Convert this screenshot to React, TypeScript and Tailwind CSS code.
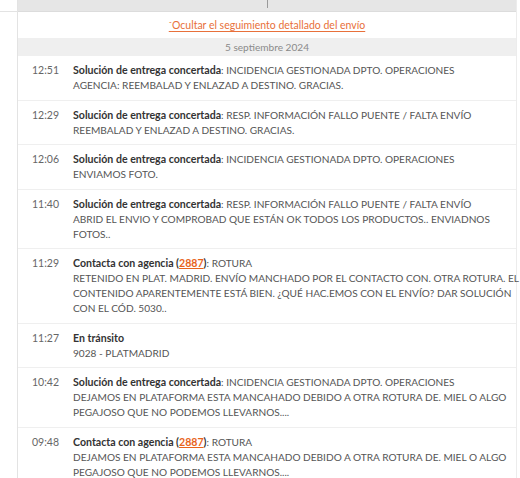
import React from 'react';

interface Entry {
  time: string;
  title: string;
  agency?: string;
  status?: string;
  lines: string[];
}

const entries: Entry[] = [
  {
    time: '12:51',
    title: 'Solución de entrega concertada',
    status: 'INCIDENCIA GESTIONADA DPTO. OPERACIONES',
    lines: ['AGENCIA: REEMBALAD Y ENLAZAD A DESTINO. GRACIAS.'],
  },
  {
    time: '12:29',
    title: 'Solución de entrega concertada',
    status: 'RESP. INFORMACIÓN FALLO PUENTE / FALTA ENVÍO',
    lines: ['REEMBALAD Y ENLAZAD A DESTINO. GRACIAS.'],
  },
  {
    time: '12:06',
    title: 'Solución de entrega concertada',
    status: 'INCIDENCIA GESTIONADA DPTO. OPERACIONES',
    lines: ['ENVIAMOS FOTO.'],
  },
  {
    time: '11:40',
    title: 'Solución de entrega concertada',
    status: 'RESP. INFORMACIÓN FALLO PUENTE / FALTA ENVÍO',
    lines: ['ABRID EL ENVIO Y COMPROBAD QUE ESTÁN OK TODOS LOS PRODUCTOS.. ENVIADNOS', 'FOTOS..'],
  },
  {
    time: '11:29',
    title: 'Contacta con agencia',
    agency: '2887',
    status: 'ROTURA',
    lines: [
      'RETENIDO EN PLAT. MADRID. ENVÍO MANCHADO POR EL CONTACTO CON. OTRA ROTURA. EL',
      'CONTENIDO APARENTEMENTE ESTÁ BIEN. ¿QUÉ HAC.EMOS CON EL ENVÍO? DAR SOLUCIÓN',
      'CON EL CÓD. 5030..',
    ],
  },
  {
    time: '11:27',
    title: 'En tránsito',
    lines: ['9028 - PLATMADRID'],
  },
  {
    time: '10:42',
    title: 'Solución de entrega concertada',
    status: 'INCIDENCIA GESTIONADA DPTO. OPERACIONES',
    lines: ['DEJAMOS EN PLATAFORMA ESTA MANCAHADO DEBIDO A OTRA ROTURA DE. MIEL O ALGO', 'PEGAJOSO QUE NO PODEMOS LLEVARNOS....'],
  },
  {
    time: '09:48',
    title: 'Contacta con agencia',
    agency: '2887',
    status: 'ROTURA',
    lines: ['DEJAMOS EN PLATAFORMA ESTA MANCAHADO DEBIDO A OTRA ROTURA DE. MIEL O ALGO', 'PEGAJOSO QUE NO PODEMOS LLEVARNOS....'],
  },
];

export default function App() {
  return (
    <div className="w-[520px] h-[478px] overflow-hidden bg-white flex items-start font-['Lato',sans-serif] text-[10.1px] leading-[15px] text-[#555]">
      {/* left gutter */}
      <div className="w-[18px] h-full shrink-0 border-r border-[#e3e3e3]">
        <div className="h-[12px] border-b border-[#e3e3e3]"></div>
      </div>

      <div className="w-[499px] shrink-0 min-h-full border-r border-[#ececec] flex flex-col">
        {/* top bar */}
        <div className="h-[12px] shrink-0 bg-[#e6e6e6] border-b border-[#dcdcdc] flex justify-center">
          <div className="w-px h-[8px] bg-[#9a9a9a]"></div>
        </div>

        <div className="h-[26px] shrink-0 flex items-center justify-center">
          <span className="text-[10.5px] text-[#e8703a] underline underline-offset-2">
            <span className="text-[8px] align-top">ˆ</span>Ocultar el seguimiento detallado del envío
          </span>
        </div>

        <div className="h-[18px] shrink-0 bg-[#efefef] flex items-center justify-center text-[#8a8a8a]">
          5 septiembre 2024
        </div>

        <div className="flex flex-col shrink-0">
          {entries.map((e, i) => (
            <div
              key={i}
              className={`flex pt-[7px] pb-[6.5px] ${i < entries.length - 1 ? 'border-b border-[#efefef]' : ''}`}
            >
              <div className="w-[55px] shrink-0 pl-[14px] text-[#666] text-[10.5px]">{e.time}</div>
              <div className="flex-1 whitespace-nowrap">
                <div>
                  <span className="font-bold text-[10.6px] text-[#333]">{e.title}</span>
                  {e.agency && (
                    <>
                      <span className="font-bold text-[10.6px] text-[#333]"> (</span>
                      <span className="font-bold text-[10.6px] text-[#e8641c] underline">{e.agency}</span>
                      <span className="font-bold text-[10.6px] text-[#333]">)</span>
                    </>
                  )}
                  {e.status && <span>: {e.status}</span>}
                </div>
                {e.lines.map((l, j) => (
                  <div key={j}>{l}</div>
                ))}
              </div>
            </div>
          ))}
        </div>
      </div>
    </div>
  );
}
